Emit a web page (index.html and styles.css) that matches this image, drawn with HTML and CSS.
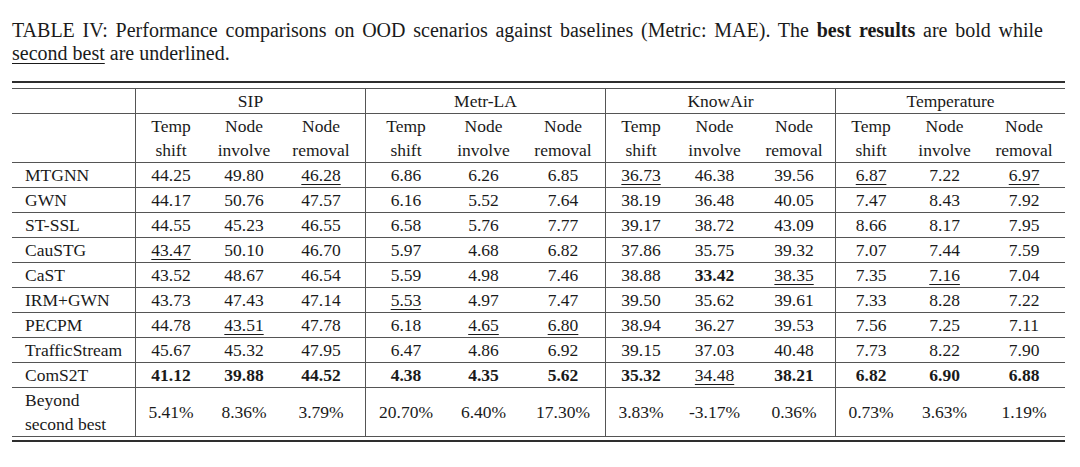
FILE: index.html
```html
<!DOCTYPE html>
<html lang="en">
<head>
<meta charset="utf-8">
<title>TABLE IV</title>
<link rel="stylesheet" href="styles.css">
</head>
<body>
<div class="page">
  <div class="caption">
    <div class="cap-line1">TABLE IV: Performance comparisons on OOD scenarios against baselines (Metric: MAE). The <b>best results</b> are bold while</div>
    <div class="cap-line2"><span class="u">second best</span> are underlined.</div>
  </div>
  <div class="rule-thick top"></div>
  <table class="results">
    <colgroup>
      <col class="c-name">
      <col class="c70"><col class="c76"><col class="c84">
      <col class="c80"><col class="c75"><col class="c85">
      <col class="c70"><col class="c77"><col class="c83">
      <col class="c70"><col class="c77"><col class="c82">
    </colgroup>
    <thead>
      <tr class="h1">
        <th class="name sep"></th>
        <th colspan="3" class="sep">SIP</th>
        <th colspan="3" class="sep">Metr-LA</th>
        <th colspan="3" class="sep">KnowAir</th>
        <th colspan="3">Temperature</th>
      </tr>
      <tr class="h2">
        <th class="name sep"></th>
        <th>Temp<br>shift</th><th>Node<br>involve</th><th class="sep shift">Node<br>removal</th>
        <th>Temp<br>shift</th><th>Node<br>involve</th><th class="sep">Node<br>removal</th>
        <th>Temp<br>shift</th><th>Node<br>involve</th><th class="sep">Node<br>removal</th>
        <th>Temp<br>shift</th><th>Node<br>involve</th><th>Node<br>removal</th>
      </tr>
    </thead>
    <tbody>
      <tr>
        <td class="name sep">MTGNN</td>
        <td>44.25</td><td>49.80</td><td class="sep shift"><span class="u">46.28</span></td>
        <td>6.86</td><td>6.26</td><td class="sep">6.85</td>
        <td><span class="u">36.73</span></td><td>46.38</td><td class="sep">39.56</td>
        <td><span class="u">6.87</span></td><td>7.22</td><td><span class="u">6.97</span></td>
      </tr>
      <tr class="short">
        <td class="name sep">GWN</td>
        <td>44.17</td><td>50.76</td><td class="sep shift">47.57</td>
        <td>6.16</td><td>5.52</td><td class="sep">7.64</td>
        <td>38.19</td><td>36.48</td><td class="sep">40.05</td>
        <td>7.47</td><td>8.43</td><td>7.92</td>
      </tr>
      <tr>
        <td class="name sep">ST-SSL</td>
        <td>44.55</td><td>45.23</td><td class="sep shift">46.55</td>
        <td>6.58</td><td>5.76</td><td class="sep">7.77</td>
        <td>39.17</td><td>38.72</td><td class="sep">43.09</td>
        <td>8.66</td><td>8.17</td><td>7.95</td>
      </tr>
      <tr>
        <td class="name sep">CauSTG</td>
        <td><span class="u">43.47</span></td><td>50.10</td><td class="sep shift">46.70</td>
        <td>5.97</td><td>4.68</td><td class="sep">6.82</td>
        <td>37.86</td><td>35.75</td><td class="sep">39.32</td>
        <td>7.07</td><td>7.44</td><td>7.59</td>
      </tr>
      <tr>
        <td class="name sep">CaST</td>
        <td>43.52</td><td>48.67</td><td class="sep shift">46.54</td>
        <td>5.59</td><td>4.98</td><td class="sep">7.46</td>
        <td>38.88</td><td><b>33.42</b></td><td class="sep"><span class="u">38.35</span></td>
        <td>7.35</td><td><span class="u">7.16</span></td><td>7.04</td>
      </tr>
      <tr class="short">
        <td class="name sep">IRM+GWN</td>
        <td>43.73</td><td>47.43</td><td class="sep shift">47.14</td>
        <td><span class="u">5.53</span></td><td>4.97</td><td class="sep">7.47</td>
        <td>39.50</td><td>35.62</td><td class="sep">39.61</td>
        <td>7.33</td><td>8.28</td><td>7.22</td>
      </tr>
      <tr>
        <td class="name sep">PECPM</td>
        <td>44.78</td><td><span class="u">43.51</span></td><td class="sep shift">47.78</td>
        <td>6.18</td><td><span class="u">4.65</span></td><td class="sep"><span class="u">6.80</span></td>
        <td>38.94</td><td>36.27</td><td class="sep">39.53</td>
        <td>7.56</td><td>7.25</td><td>7.11</td>
      </tr>
      <tr>
        <td class="name sep">TrafficStream</td>
        <td>45.67</td><td>45.32</td><td class="sep shift">47.95</td>
        <td>6.47</td><td>4.86</td><td class="sep">6.92</td>
        <td>39.15</td><td>37.03</td><td class="sep">40.48</td>
        <td>7.73</td><td>8.22</td><td>7.90</td>
      </tr>
      <tr>
        <td class="name sep">ComS2T</td>
        <td><b>41.12</b></td><td><b>39.88</b></td><td class="sep shift"><b>44.52</b></td>
        <td><b>4.38</b></td><td><b>4.35</b></td><td class="sep"><b>5.62</b></td>
        <td><b>35.32</b></td><td><span class="u">34.48</span></td><td class="sep"><b>38.21</b></td>
        <td><b>6.82</b></td><td><b>6.90</b></td><td><b>6.88</b></td>
      </tr>
      <tr class="tall">
        <td class="name sep">Beyond<br>second best</td>
        <td>5.41%</td><td>8.36%</td><td class="sep shift">3.79%</td>
        <td>20.70%</td><td>6.40%</td><td class="sep">17.30%</td>
        <td>3.83%</td><td>-3.17%</td><td class="sep">0.36%</td>
        <td>0.73%</td><td>3.63%</td><td>1.19%</td>
      </tr>
    </tbody>
  </table>
  <div class="rule-thick bottom"></div>
</div>
</body>
</html>
```

FILE: styles.css
```css
html, body {
  margin: 0;
  padding: 0;
  background: #ffffff;
}

body {
  font-family: "Liberation Serif", "Times New Roman", serif;
  color: #1a1a1a;
}

.page {
  padding: 19px 0 0 12px;
}

.caption {
  width: 1031px;
  font-size: 20px;
  line-height: 23px;
}

.cap-line1 {
  text-align: justify;
  text-align-last: justify;
}

.u {
  text-decoration: underline;
  text-decoration-thickness: 1px;
  text-underline-offset: 3px;
}

.rule-thick {
  width: 1053px;
  height: 2px;
  background: #2e2e2e;
}

.rule-thick.top {
  margin-top: 16px;
  margin-bottom: 5px;
}

.rule-thick.bottom {
  margin-top: 3px;
}

.results {
  width: 1053px;
  table-layout: fixed;
  border-collapse: separate;
  border-spacing: 0;
  border-top: 1px solid #555;
  font-size: 17.5px;
  line-height: 24px;
}

.c-name { width: 124px; }
.c70 { width: 70px; }
.c75 { width: 75px; }
.c76 { width: 76px; }
.c77 { width: 77px; }
.c80 { width: 80px; }
.c82 { width: 82px; }
.c83 { width: 83px; }
.c84 { width: 84px; }
.c85 { width: 85px; }

.results th,
.results td {
  padding: 0;
  height: 24px;
  text-align: center;
  vertical-align: middle;
  font-weight: normal;
  border-bottom: 1px solid #555;
  white-space: nowrap;
}

.results .short td {
  height: 23px;
}

.results .h2 th,
.results .tall td {
  height: 48px;
}

.results .sep {
  border-right: 1px solid #555;
}

.results .shift {
  padding-right: 5px;
}

.results .name {
  text-align: left;
  padding-left: 13px;
}

.results b {
  font-weight: bold;
}
```
